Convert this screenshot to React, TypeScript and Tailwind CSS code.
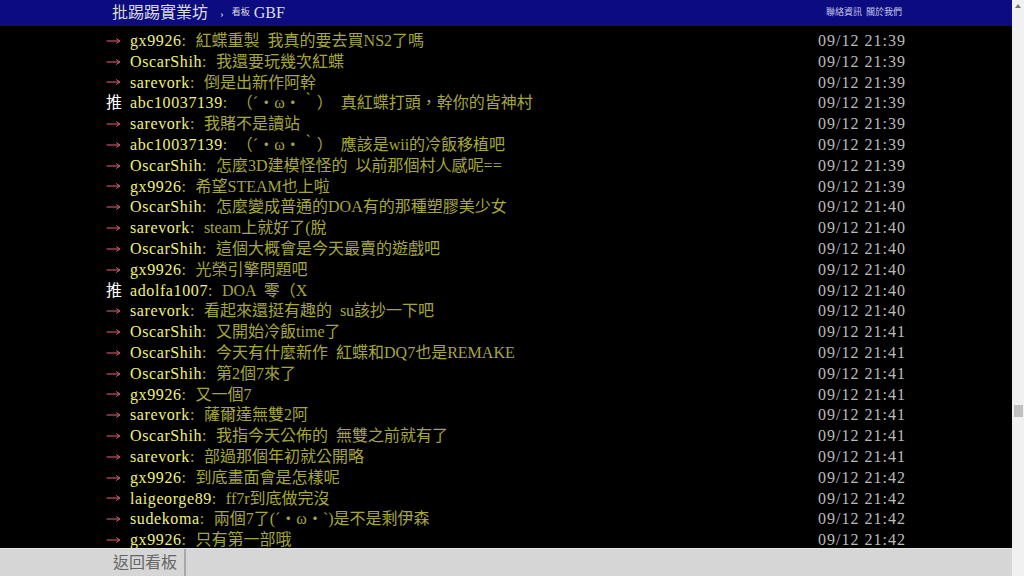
import React from 'react';

type Push = { tag: string; user: string; text: string; time: string };

const pushes: Push[] = [
  { tag: '→', user: 'gx9926', text: '紅蝶重製 我真的要去買NS2了嗎', time: '09/12 21:39' },
  { tag: '→', user: 'OscarShih', text: '我還要玩幾次紅蝶', time: '09/12 21:39' },
  { tag: '→', user: 'sarevork', text: '倒是出新作阿幹', time: '09/12 21:39' },
  { tag: '推', user: 'abc10037139', text: '（´・ω・｀） 真紅蝶打頭，幹你的皆神村', time: '09/12 21:39' },
  { tag: '→', user: 'sarevork', text: '我賭不是讀站', time: '09/12 21:39' },
  { tag: '→', user: 'abc10037139', text: '（´・ω・｀） 應該是wii的冷飯移植吧', time: '09/12 21:39' },
  { tag: '→', user: 'OscarShih', text: '怎麼3D建模怪怪的 以前那個村人感呢==', time: '09/12 21:39' },
  { tag: '→', user: 'gx9926', text: '希望STEAM也上啦', time: '09/12 21:39' },
  { tag: '→', user: 'OscarShih', text: '怎麼變成普通的DOA有的那種塑膠美少女', time: '09/12 21:40' },
  { tag: '→', user: 'sarevork', text: 'steam上就好了(脫', time: '09/12 21:40' },
  { tag: '→', user: 'OscarShih', text: '這個大概會是今天最賣的遊戲吧', time: '09/12 21:40' },
  { tag: '→', user: 'gx9926', text: '光榮引擎問題吧', time: '09/12 21:40' },
  { tag: '推', user: 'adolfa1007', text: 'DOA 零（X', time: '09/12 21:40' },
  { tag: '→', user: 'sarevork', text: '看起來還挺有趣的 su該抄一下吧', time: '09/12 21:40' },
  { tag: '→', user: 'OscarShih', text: '又開始冷飯time了', time: '09/12 21:41' },
  { tag: '→', user: 'OscarShih', text: '今天有什麼新作 紅蝶和DQ7也是REMAKE', time: '09/12 21:41' },
  { tag: '→', user: 'OscarShih', text: '第2個7來了', time: '09/12 21:41' },
  { tag: '→', user: 'gx9926', text: '又一個7', time: '09/12 21:41' },
  { tag: '→', user: 'sarevork', text: '薩爾達無雙2阿', time: '09/12 21:41' },
  { tag: '→', user: 'OscarShih', text: '我指今天公佈的 無雙之前就有了', time: '09/12 21:41' },
  { tag: '→', user: 'sarevork', text: '部過那個年初就公開略', time: '09/12 21:41' },
  { tag: '→', user: 'gx9926', text: '到底畫面會是怎樣呢', time: '09/12 21:42' },
  { tag: '→', user: 'laigeorge89', text: 'ff7r到底做完沒', time: '09/12 21:42' },
  { tag: '→', user: 'sudekoma', text: '兩個7了(´・ω・`)是不是剩伊森', time: '09/12 21:42' },
  { tag: '→', user: 'gx9926', text: '只有第一部哦', time: '09/12 21:42' },
];

const font = "font-['Liberation_Serif','Noto_Sans_CJK_TC',serif]";

// thin pink arrow like the terminal glyph
const Arrow = () => (
  <svg width="15" height="8" viewBox="0 0 15 8" className="mt-[-1px]">
    <path d="M0.5 4H13.5M10.2 1.5L13.8 4L10.2 6.5" fill="none" stroke="#ec5f78" strokeWidth="1" />
  </svg>
);

const PushRow = ({ tag, user, text, time }: Push) => (
  <div className="flex h-[20.8px] items-center justify-between whitespace-pre text-[16px] leading-[20.8px]">
    <div className="flex items-center">
      <span className="flex w-[24px] items-center text-white">{tag === '推' ? '推' : <Arrow />}</span>
      <span className="text-[#f0f07e] tracking-[0.6px]">{user}</span>
      <span className="inline-block w-[14px] text-[#a6a63c]">:</span>
      <span className="text-[#a6a63c] [word-spacing:4px]">{text}</span>
    </div>
    <span className="tracking-[1px] text-[#bbbbbb]">{time}</span>
  </div>
);

const App = () => {
  return (
    <div className={`flex h-[576px] w-[1024px] overflow-hidden bg-black ${font}`}>
      <div className="flex min-w-0 flex-1 flex-col">
        <div className="h-[26px] shrink-0 bg-[#0c0c80]">
          <div className="mx-auto flex h-full w-[800px] items-center justify-between pl-[6px] pr-[4px]">
            <div className="flex items-center text-[#dcdcdc]">
              <span className="text-[16px] leading-none">批踢踢實業坊</span>
              <span className="ml-[12px] text-[11px]">›</span>
              <span className="ml-[8px] text-[9px]">看板</span>
              <span className="ml-[4px] text-[16px] leading-none">GBF</span>
            </div>
            <div className="flex gap-[4px] text-[9px] text-[#c8c8e8]">
              <span>聯絡資訊</span>
              <span>關於我們</span>
            </div>
          </div>
        </div>
        <div className="min-h-0 flex-1 overflow-hidden pt-[5px]">
          <div className="mx-auto w-[800px]">
            {pushes.map((p, i) => (
              <PushRow {...p} key={i} />
            ))}
          </div>
        </div>
        <div className="h-[28px] shrink-0 border-t border-[#e4e4e4] bg-[#d6d6d6]">
          <div className="mx-auto flex h-full w-[800px]">
            <div className="flex items-center border-r-2 border-[#a8a8a8] px-[7px] text-[16px] text-[#666666]">
              返回看板
            </div>
          </div>
        </div>
      </div>
      <div className="flex w-[12px] shrink-0 flex-col items-center bg-[#f1f1f1]">
        <div className="mt-[4px] h-0 w-0 border-x-[3px] border-b-[4px] border-x-transparent border-b-[#777777]" />
        <div className="mt-[397px] h-[12px] w-[9px] bg-[#c1c1c1]" />
      </div>
    </div>
  );
};

export default App;
